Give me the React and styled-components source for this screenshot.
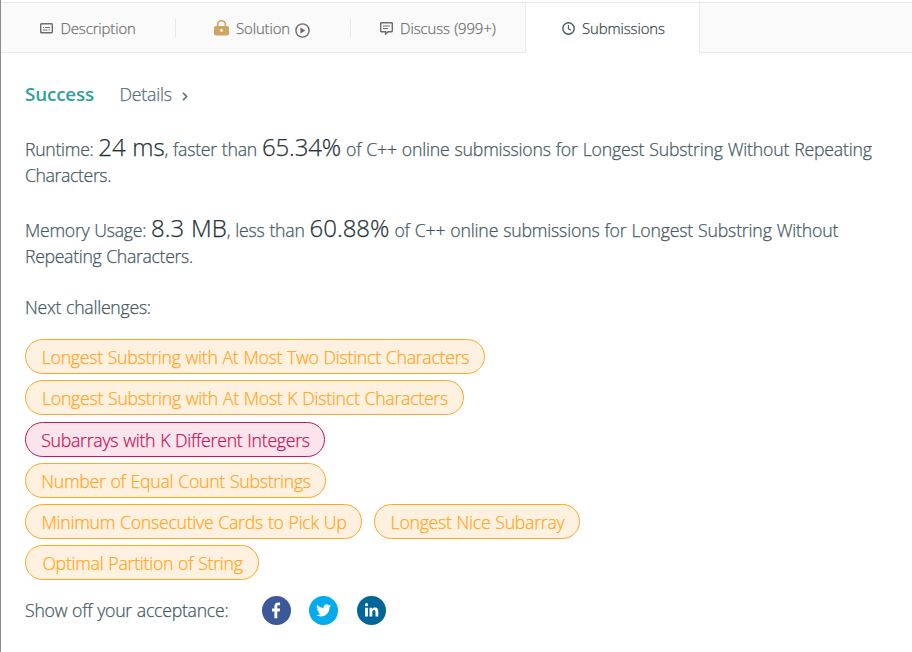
import React from "react";
import styled, { createGlobalStyle } from "styled-components";

const GlobalStyle = createGlobalStyle`
  *, *::before, *::after { box-sizing: border-box; }
  body { margin: 0; background: #fff; }
`;

const Page = styled.div`
  height: 652px;
  overflow: hidden;
  padding-top: 2px;
  border-left: 1px solid #8c8c8c;
  background: #fff;
  color: #455a64;
  font: 300 17.7px/26px "Open Sans", "Noto Sans", sans-serif;
  letter-spacing: -0.27px;
  word-spacing: 0.6px;
  -webkit-text-stroke: 0.25px currentColor;
`;

const TabBar = styled.nav`
  display: flex;
  height: 51px;
  border-top: 1px solid #ebebeb;
  border-bottom: 1px solid #ebebeb;
  background: #fafafa;
`;

const Tab = styled.div`
  display: flex;
  align-items: center;
  width: ${(p) => p.$width || 175}px;
  height: ${(p) => (p.$active ? 50 : 49)}px;
  padding: ${(p) => (p.$active ? 0 : 1)}px 0 0 ${(p) => p.$inset}px;
  font-size: 14.9px;
  letter-spacing: -0.11px;
  color: ${(p) => (p.$active ? "#37474f" : "#707070")};
  background: ${(p) => (p.$active ? "#fff" : "transparent")};
  border: solid #ebebeb;
  border-width: ${(p) => (p.$active ? "0 1px" : "0")};
  white-space: nowrap;
`;

const TabLabel = styled.span`
  margin: ${(p) => (p.$lift ? -1 : 0)}px 0 0 ${(p) => p.$gap}px;
`;

const Divider = styled.span`
  width: 1px;
  height: 20px;
  margin: 15px 0 0 -1px;
  background: #e9e9e9;
`;

const Content = styled.main`
  padding: 28px 24px 0;
`;

const ResultHeader = styled.header`
  display: flex;
  align-items: center;
  height: 26px;
`;

const Status = styled.span`
  width: 94.5px;
  font-size: 18.8px;
  font-weight: 600;
  letter-spacing: -0.15px;
  -webkit-text-stroke: 0;
  color: #2fa198;
`;

const DetailsLink = styled.a`
  display: flex;
  align-items: center;
  gap: 10px;
  letter-spacing: -0.19px;
  color: #546e7a;
  svg { margin-top: 4px; }
`;

const Stat = styled.p`
  margin: 29px 0 0;
  white-space: nowrap;
`;

const Run = styled.span`
  letter-spacing: ${(p) => p.$spacing}px;
`;

const Figure = styled.span`
  font-size: 24px;
  line-height: 0;
  color: #263238;
  letter-spacing: ${(p) => p.$spacing ?? -0.1}px;
`;

const NextTitle = styled.div`
  margin-top: 25px;
`;

const Challenges = styled.div`
  display: flex;
  flex-direction: column;
  gap: 6.2px;
  margin-top: 19.2px;
`;

const ChallengeRow = styled.div`
  display: flex;
  gap: 12px;
`;

const pillTones = {
  medium: { ink: "#ffa726", fill: "#fff1df" },
  hard: { ink: "#c2185b", fill: "#fbe4ec" },
};

const Pill = styled.a`
  display: flex;
  align-items: center;
  justify-content: center;
  width: ${(p) => p.$width}px;
  height: 35px;
  padding: 1px 0 0 1px;
  border: 1px solid ${(p) => pillTones[p.$tone].ink};
  border-radius: 18px;
  background: ${(p) => pillTones[p.$tone].fill};
  color: ${(p) => pillTones[p.$tone].ink};
  white-space: nowrap;
`;

const ShareRow = styled.div`
  display: flex;
  align-items: center;
  height: 29px;
  margin-top: 15.8px;
`;

const ShareLabel = styled.span`
  width: 237px;
`;

const ShareIcons = styled.div`
  display: flex;
  gap: 18.4px;
`;

const Badge = styled.a`
  display: flex;
  width: 29px;
  height: 29px;
  border-radius: 50%;
  background: ${(p) => p.$color};
  svg { fill: #fff; }
`;

const DescriptionIcon = () => (
  <svg width="13" height="11" viewBox="0 0 13 11" fill="none" stroke="#6c6c6c">
    <rect x=".7" y=".7" width="11.6" height="9.1" rx=".8" strokeWidth="1.4" />
    <path d="M3 4.5h1.2M5 4.5h5M3 7h4.5M8.5 7H10" strokeWidth="1.2" />
  </svg>
);

const LockIcon = () => (
  <svg width="15" height="16" viewBox="0 0 15 16">
    <path d="M3.6 7V4.6a3.9 3.9 0 0 1 7.8 0V7" fill="none" stroke="#cda662" strokeWidth="1.6" />
    <rect x="0" y="6" width="15" height="9.5" rx="2" fill="#cda662" />
    <circle cx="7.5" cy="10.4" r="1.3" fill="#fff" />
  </svg>
);

const PlayIcon = styled(({ className }) => (
  <svg className={className} width="15" height="15" viewBox="0 0 15 15">
    <circle cx="7.5" cy="7.5" r="6.6" fill="none" stroke="#6a6a6a" strokeWidth="1.4" />
    <path d="M5.4 4.6v5.8l5-2.9z" fill="#6a6a6a" />
  </svg>
))`
  margin: 4px 0 0 4.5px;
`;

const DiscussIcon = () => (
  <svg width="13" height="13" viewBox="0 0 13 13" fill="none" stroke="#6c6c6c" strokeWidth="1.4">
    <path d="M1.3.7h10.4q.6 0 .6.6v7.8q0 .6-.6.6H8.1L5.6 12V9.7H1.3q-.6 0-.6-.6V1.3q0-.6.6-.6z" />
    <path d="M3 4h7M3 6.5h5" strokeWidth="1.2" />
  </svg>
);

const ClockIcon = () => (
  <svg width="13" height="13" viewBox="0 0 13 13" fill="none" stroke="#455a64" strokeWidth="1.4">
    <circle cx="6.5" cy="6.5" r="5.7" />
    <path d="M6.4 3v3.8l2.5 1.1" strokeWidth="1.1" />
  </svg>
);

const ChevronIcon = () => (
  <svg width="6" height="9" viewBox="0 0 6 9" fill="none" stroke="#546e7a" strokeWidth="1.5">
    <path d="M1 .9l3.7 3.6L1 8.1" />
  </svg>
);

const FacebookIcon = () => (
  <svg width="29" height="29" viewBox="0 0 29 29">
    <path d="M12.4 22.3v-6.9H10v-2.9h2.4v-2.1c0-2.5 1.5-3.8 3.7-3.8 1 0 1.8.1 2 .1v2.6h-1.4c-1.1 0-1.4.5-1.4 1.3v1.9h2.8l-.4 2.9h-2.4v6.9z" />
  </svg>
);

const TwitterIcon = () => (
  <svg width="29" height="29" viewBox="0 0 29 29">
    <g transform="translate(7.2 6.9) scale(.62)">
      <path d="M23.95 4.57a10 10 0 0 1-2.82.77 4.96 4.96 0 0 0 2.16-2.72c-.95.55-2 .96-3.13 1.18a4.92 4.92 0 0 0-8.38 4.48C7.69 8.09 4.07 6.13 1.64 3.16a4.92 4.92 0 0 0 1.52 6.57 4.9 4.9 0 0 1-2.23-.61v.06a4.92 4.92 0 0 0 3.95 4.83 5 5 0 0 1-2.21.08 4.94 4.94 0 0 0 4.6 3.42A9.87 9.87 0 0 1 0 19.54a13.99 13.99 0 0 0 7.55 2.21c9.05 0 14-7.5 14-13.98 0-.21 0-.42-.02-.63a9.94 9.94 0 0 0 2.46-2.55z" />
    </g>
  </svg>
);

const LinkedinIcon = () => (
  <svg width="29" height="29" viewBox="0 0 29 29">
    <circle cx="9.5" cy="8.7" r="1.6" />
    <path d="M8.1 11.7h2.8v8.8H8.1zM12.5 11.7h2.7V13c.4-.8 1.3-1.5 2.7-1.5 2.8 0 3.4 1.9 3.4 4.3v4.7h-2.8v-4.2c0-1.2-.1-2.4-1.5-2.4s-1.7 1.1-1.7 2.3v4.3h-2.8z" />
  </svg>
);

const challengeRows = [
  [{ title: "Longest Substring with At Most Two Distinct Characters", width: 460 }],
  [{ title: "Longest Substring with At Most K Distinct Characters", width: 439 }],
  [{ title: "Subarrays with K Different Integers", width: 300, tone: "hard" }],
  [{ title: "Number of Equal Count Substrings", width: 301 }],
  [
    { title: "Minimum Consecutive Cards to Pick Up", width: 337 },
    { title: "Longest Nice Subarray", width: 206 },
  ],
  [{ title: "Optimal Partition of String", width: 234 }],
];

export default function App() {
  return (
    <>
      <GlobalStyle />
      <Page>
        <TabBar>
          <Tab $inset={39}>
            <DescriptionIcon />
            <TabLabel $gap={7.4}>Description</TabLabel>
          </Tab>
          <Divider />
          <Tab $inset={38}>
            <LockIcon />
            <TabLabel $gap={7}>Solution</TabLabel>
            <PlayIcon />
          </Tab>
          <Divider />
          <Tab $inset={29} $width={174}>
            <DiscussIcon />
            <TabLabel $gap={7}>Discuss (999+)</TabLabel>
          </Tab>
          <Tab $inset={36} $active>
            <ClockIcon />
            <TabLabel $gap={7} $lift>Submissions</TabLabel>
          </Tab>
        </TabBar>
        <Content>
          <ResultHeader>
            <Status>Success</Status>
            <DetailsLink>
              Details
              <ChevronIcon />
            </DetailsLink>
          </ResultHeader>
          <Stat>
            <Run $spacing={-0.3}>Runtime: </Run>
            <Figure>24 ms</Figure>
            <Run $spacing={-0.25}>, faster than </Run>
            <Figure $spacing={-0.15}>65.34%</Figure>
            <Run $spacing={-0.2}> of C++ online submissions for Longest Substring Without Repeating</Run>
            <br />
            <Run $spacing={-0.4}>Characters.</Run>
          </Stat>
          <Stat>
            <Run $spacing={-0.27}>Memory Usage: </Run>
            <Figure $spacing={0}>8.3 MB</Figure>
            <Run $spacing={-0.25}>, less than </Run>
            <Figure $spacing={0}>60.88%</Figure>
            <Run $spacing={-0.19}> of C++ online submissions for Longest Substring Without</Run>
            <br />
            <Run $spacing={-0.34}>Repeating Characters.</Run>
          </Stat>
          <NextTitle>Next challenges:</NextTitle>
          <Challenges>
            {challengeRows.map((row) => (
              <ChallengeRow key={row[0].title}>
                {row.map(({ title, width, tone = "medium" }) => (
                  <Pill key={title} $width={width} $tone={tone}>{title}</Pill>
                ))}
              </ChallengeRow>
            ))}
          </Challenges>
          <ShareRow>
            <ShareLabel>Show off your acceptance:</ShareLabel>
            <ShareIcons>
              <Badge $color="#3b5998"><FacebookIcon /></Badge>
              <Badge $color="#00aced"><TwitterIcon /></Badge>
              <Badge $color="#006699"><LinkedinIcon /></Badge>
            </ShareIcons>
          </ShareRow>
        </Content>
      </Page>
    </>
  );
}
